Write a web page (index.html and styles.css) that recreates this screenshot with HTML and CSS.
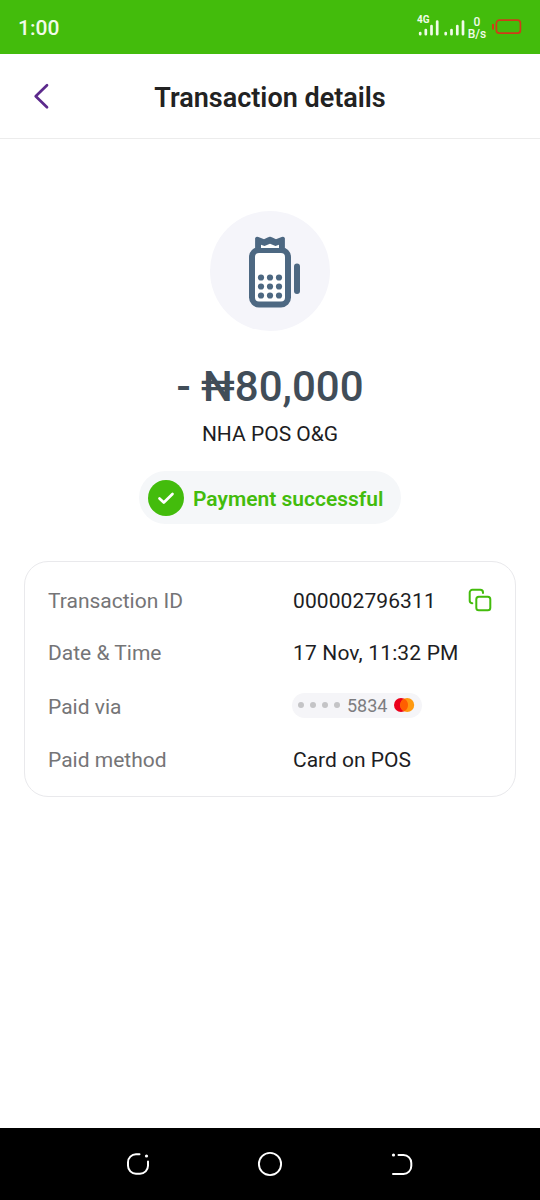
FILE: index.html
```html
<!DOCTYPE html>
<html lang="en">
<head>
<meta charset="utf-8">
<title>Transaction details</title>
<link rel="stylesheet" href="styles.css">
</head>
<body>
<div class="status-bar">
  <span class="clock">1:00</span>
  <div class="indicators">
    <div class="signal-group">
      <span class="network">4G</span>
      <svg class="signal" width="52" height="22" viewBox="0 0 52 22" fill="none" stroke="#f0fbe9" stroke-width="2.7" stroke-linecap="round">
        <path d="M3.200 16v1.200M8.800 13v4.200M14.500 9v8.200M20.200 4.500v12.700M28.700 16v1.200M34.500 13v4.200M40.300 9v8.200M46 4.500v12.700"/>
      </svg>
    </div>
    <div class="speed"><span>0</span><span>B/s</span></div>
    <svg class="battery" width="32" height="18" viewBox="0 0 32 18" fill="none" stroke="#cf3b19">
      <rect x="5.400" y="2.200" width="24" height="13" rx="3" stroke-width="1.700"/>
      <path d="M2 6v5.500" stroke-width="2"/>
    </svg>
  </div>
</div>
<header class="app-bar">
  <svg class="back" width="20" height="30" viewBox="0 0 20 30" fill="none" stroke="#5c2a8c" stroke-width="2.700" stroke-linecap="round" stroke-linejoin="round">
    <path d="M16 4.200L4.700 15.200L16 26.200"/>
  </svg>
  <h1 class="title">Transaction details</h1>
</header>
<main class="content">
  <div class="avatar">
    <svg width="120" height="120" viewBox="0 0 120 120" fill="none" stroke="#4d6882">
      <rect x="42" y="39" width="36" height="54.500" rx="7" fill="#fff" stroke-width="6"/>
      <path d="M46 27.500Q46.500 26.500 48 26.800L53.800 29.200L59 26.900Q60 26.400 61 26.900L66.200 29.200L72 26.800Q73.500 26.500 74 27.500V36.500H46Z" fill="#4d6882" stroke-width="1.800" stroke-linejoin="round"/>
      <path d="M51 33.800L54.500 35L60 32.800L65.500 35L69 33.800V37H51Z" fill="#fff" stroke="none"/>
      <path d="M87 55.500v24.500" stroke-width="6" stroke-linecap="round"/>
      <g fill="#4d6882" stroke="none">
        <circle cx="51" cy="66.500" r="3.100"/><circle cx="60" cy="66.500" r="3.100"/><circle cx="69" cy="66.500" r="3.100"/>
        <circle cx="51" cy="75.500" r="3.100"/><circle cx="60" cy="75.500" r="3.100"/><circle cx="69" cy="75.500" r="3.100"/>
        <circle cx="51" cy="84.500" r="3.100"/><circle cx="60" cy="84.500" r="3.100"/><circle cx="69" cy="84.500" r="3.100"/>
      </g>
    </svg>
  </div>
  <div class="amount">- ₦80,000</div>
  <div class="merchant">NHA POS O&amp;G</div>
  <div class="status">
    <svg width="36" height="36" viewBox="0 0 36 36" fill="none">
      <circle cx="18" cy="18" r="18" fill="#43bc0c"/>
      <path d="M11.500 18.500L15.800 22.500L24.500 14" stroke="#fff" stroke-width="2.700" stroke-linecap="round" stroke-linejoin="round"/>
    </svg>
    <span class="status-text">Payment successful</span>
  </div>
  <dl class="details">
    <dt>Transaction ID</dt>
    <dd class="with-copy"><span class="id">000002796311</span>
      <svg width="24" height="24" viewBox="0 0 24 24" fill="none" stroke="#43bc0c" stroke-width="2" stroke-linecap="round">
        <rect x="8.300" y="8.800" width="14" height="13.500" rx="2.500"/>
        <path d="M4.300 15.200H4A2.700 2.700 0 0 1 1.700 12.500V4.500A2.700 2.700 0 0 1 4.400 1.800H12.300A2.700 2.700 0 0 1 15 4.500V4.900"/>
      </svg>
    </dd>
    <dt>Date &amp; Time</dt>
    <dd class="date">17 Nov, 11:32 PM</dd>
    <dt class="via">Paid via</dt>
    <dd>
      <span class="card-chip">
        <span class="dots"><i></i><i></i><i></i><i></i></span>
        <span class="last4">5834</span>
        <svg width="22" height="16" viewBox="0 0 22 16">
          <circle cx="8" cy="8" r="7" fill="#eb001b"/>
          <circle cx="14.200" cy="8" r="7" fill="#ff9a10"/>
          <path d="M11.100 1.720A7 7 0 0 1 11.100 14.280A7 7 0 0 1 11.100 1.720Z" fill="#ff5f00"/>
        </svg>
      </span>
    </dd>
    <dt>Paid method</dt>
    <dd class="method">Card on POS</dd>
  </dl>
</main>
<nav class="nav-bar">
  <svg width="28" height="28" viewBox="0 0 28 28" fill="none" stroke="#fff" stroke-width="2" stroke-linecap="round">
    <path d="M15.500 4.300H12A8 8 0 0 0 4 12.300V15.700A8 8 0 0 0 12 23.700H16A8 8 0 0 0 24 15.700V11.500"/>
    <circle cx="22.500" cy="6" r="1.600" fill="#fff" stroke="none"/>
  </svg>
  <svg width="28" height="28" viewBox="0 0 28 28" fill="none" stroke="#fff" stroke-width="1.900">
    <circle cx="14" cy="14" r="11.100"/>
  </svg>
  <svg width="28" height="28" viewBox="0 0 28 28" fill="none" stroke="#fff" stroke-width="2" stroke-linecap="round">
    <path d="M10.500 5H15.500A8 8 0 0 1 23.300 13V16A8 8 0 0 1 15.500 24H5"/>
    <circle cx="5.500" cy="5" r="1.600" fill="#fff" stroke="none"/>
  </svg>
</nav>
</body>
</html>
```
FILE: styles.css
```css
* { box-sizing: border-box; }
body {
  margin: 0;
  height: 1200px;
  display: flex;
  flex-direction: column;
  background: #fff;
  font-family: Roboto, "Liberation Sans", sans-serif;
  color: #1d1d23;
}
svg { display: block; flex: none; }
.status-bar {
  height: 54px;
  padding: 0 17px 0 18px;
  display: flex;
  align-items: center;
  justify-content: space-between;
  background: #43bc0c;
  color: #f0fbe9;
}
.clock { font-size: 21px; font-weight: 500; line-height: 24px; padding-top: 2px; }
.indicators { display: flex; align-items: center; }
.signal-group { position: relative; width: 51px; padding-top: 1px; }
.network {
  position: absolute;
  left: 0;
  top: -2px;
  font-size: 10px;
  font-weight: 700;
  line-height: 11px;
}
.speed {
  width: 18px;
  margin-right: 5px;
  padding-top: 1px;
  display: flex;
  flex-direction: column;
  align-items: center;
  font-size: 12px;
  font-weight: 500;
  line-height: 12px;
}
.app-bar {
  height: 85px;
  padding: 0 31px;
  display: grid;
  grid-template-columns: 20px 1fr 20px;
  align-items: center;
  border-bottom: 1px solid #ececec;
}
.title {
  margin: 4px 0 0;
  text-align: center;
  font-size: 27px;
  font-weight: 600;
  line-height: 32px;
  color: #222;
}
.content {
  flex: 1;
  padding: 72px 24px 0;
  display: flex;
  flex-direction: column;
  align-items: center;
}
.avatar { width: 120px; height: 120px; border-radius: 50%; background: #f5f5fa; }
.amount {
  margin-top: 31px;
  font-size: 42px;
  font-weight: 500;
  line-height: 50px;
  color: #414d58;
}
.merchant { margin-top: 9px; font-size: 21px; line-height: 26px; }
.status {
  margin-top: 24px;
  width: 262px;
  height: 53px;
  padding-left: 9px;
  display: flex;
  align-items: center;
  gap: 9px;
  border-radius: 27px;
  background: #f5f7f9;
}
.status-text { padding-top: 2px; font-size: 21px; font-weight: 600; line-height: 26px; color: #43bc0c; white-space: nowrap; }
.details {
  width: 492px;
  height: 236px;
  margin: 37px 0 0;
  padding: 12px 23px 9px;
  display: grid;
  grid-template-columns: 244px 1fr;
  grid-template-rows: 53px 52px 54px 54px;
  align-items: center;
  border: 1px solid #e9e9ec;
  border-radius: 24px;
  font-size: 21px;
  line-height: 26px;
}
.details dt { color: #757577; }
.details .via { padding-top: 2px; }
.details dd { margin: 0; }
.id { padding-left: 1px; letter-spacing: 0.1px; }
.date, .method { padding-left: 1px; }
.date { letter-spacing: 0.15px; }
.with-copy { display: flex; justify-content: space-between; align-items: center; }
.with-copy svg { margin-top: -2px; }
.card-chip {
  width: 130px;
  height: 25px;
  margin-top: -2px;
  padding: 0 6px;
  display: flex;
  align-items: center;
  border-radius: 13px;
  background: #f5f5f8;
}
.dots { display: flex; gap: 6px; margin-right: 7px; }
.dots i { width: 6px; height: 6px; border-radius: 50%; background: #c4c4c6; }
.last4 { width: 46px; padding-top: 2px; font-size: 18px; line-height: 22px; color: #7d7d80; }
.nav-bar {
  height: 72px;
  display: flex;
  align-items: center;
  justify-content: center;
  gap: 104px;
  background: #000;
}
```
